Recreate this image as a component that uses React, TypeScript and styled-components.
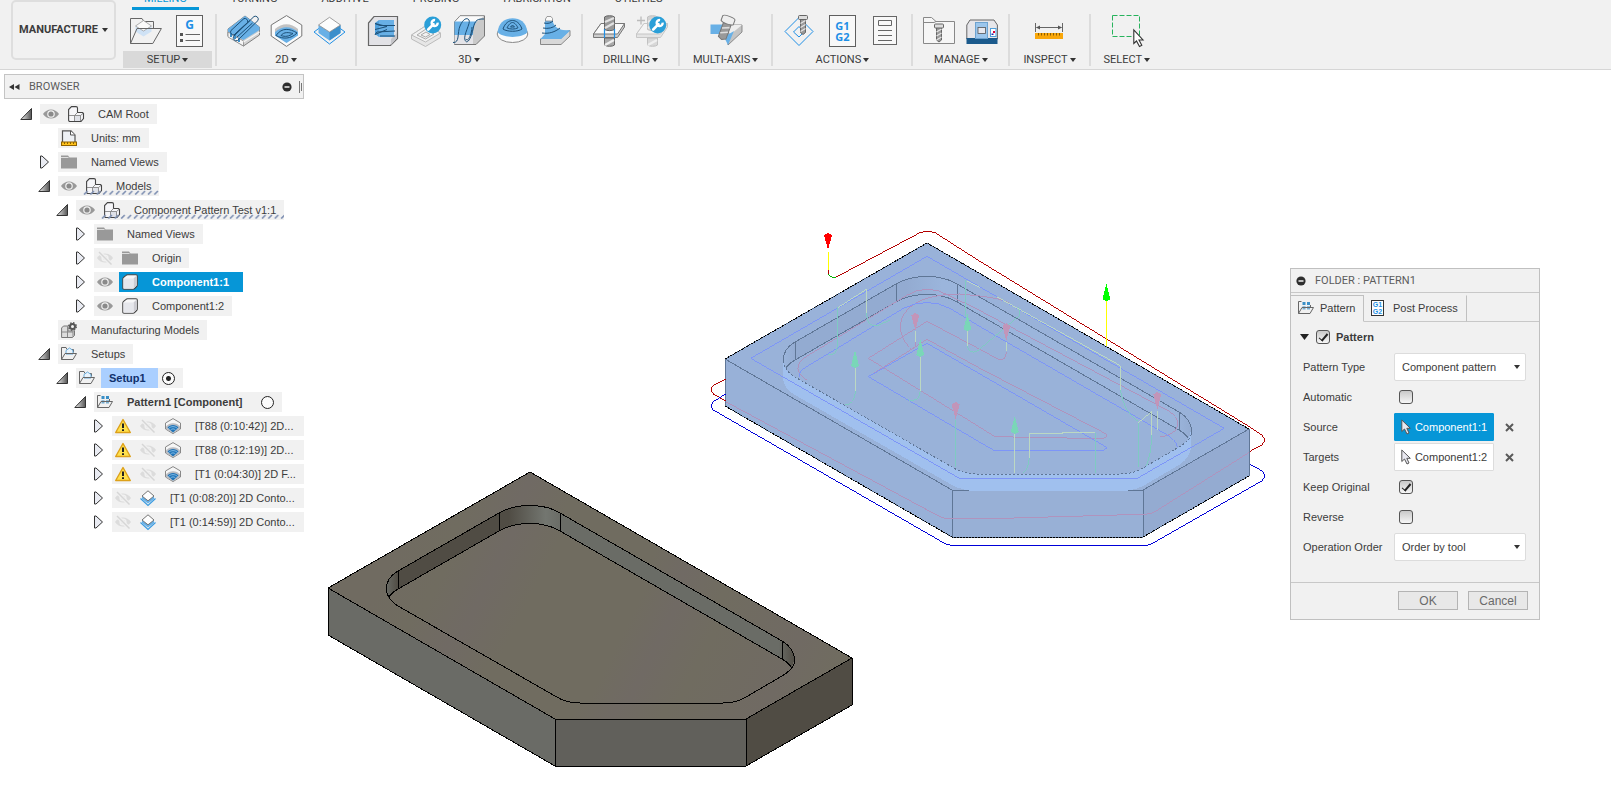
import React, { useState } from "react";
import styled, { createGlobalStyle, css } from "styled-components";

const ink = "#3c3c3c";
const panel = "#f1f1f1";
const accent = "#0696d7";
const ui = '"Liberation Sans", Arial, sans-serif';
const ribbon = 'Roboto, "Liberation Sans", sans-serif';

const Global = createGlobalStyle`
  *, *::before, *::after { box-sizing: border-box; }
  html, body { margin: 0; height: 100%; background: #fff; }
  body { font: 11px/16px ${ui}; color: ${ink}; overflow: hidden; }
  #root { height: 100%; }
  button, select, input { font: inherit; color: inherit; margin: 0; }
  ul { list-style: none; margin: 0; padding: 0; }
`;

const Page = styled.div`
  display: flex;
  flex-direction: column;
  min-height: 100%;
`;

/* ---------- ribbon ---------- */

const Toolbar = styled.header`
  display: flex;
  gap: 4px;
  padding: 0 11px 1px;
  background: ${panel};
  border-bottom: 1px solid #d6d6d6;
  font-family: ${ribbon};
`;

const PlainButton = styled.button`
  border: 0;
  padding: 0;
  background: none;
  display: flex;
  align-items: center;
  justify-content: center;
`;

const WorkspaceButton = styled(PlainButton)`
  width: 105px;
  height: 60px;
  gap: 4px;
  border: 2px solid #dedede;
  border-radius: 5px;
  font-weight: 700;
`;

const RibbonBody = styled.div`
  flex: 1;
  min-width: 0;
`;

const TabRow = styled.nav`
  display: flex;
  align-items: flex-end;
  gap: 20px;
  height: 10px;
  padding-left: 12px;
  overflow: hidden;
`;

const RibbonTab = styled.button<{ $active?: boolean }>`
  flex: none;
  height: 17px;
  padding: 0 12px 3px;
  border: 0;
  border-bottom: 3px solid ${(p) => (p.$active ? accent : "transparent")};
  background: none;
  color: ${(p) => (p.$active ? accent : ink)};
  line-height: 11px;
`;

const ToolRow = styled.div`
  display: flex;
  align-items: flex-start;
  padding-top: 4px;
`;

const Group = styled.section`
  display: flex;
  flex-direction: column;
  gap: 4px;
  padding: 1px 3px 0;
`;

const Divider = styled.div`
  width: 2px;
  height: 52px;
  background: #dcdcdc;
`;

const IconRow = styled.div`
  display: flex;
  justify-content: center;
  gap: 11px;
  padding: 0 7px;
`;

const GroupLabel = styled(PlainButton)<{ $active?: boolean }>`
  height: 17px;
  padding: 1px 10px 0;
  gap: 2px;
  background: ${(p) => (p.$active ? "#d9d9d9" : "none")};
  white-space: nowrap;
`;

const Svg = styled.svg`
  display: block;
  flex: none;
  overflow: visible;
`;

const Caret = () => (
  <Svg width="6" height="4" viewBox="0 0 6 4" aria-hidden="true">
    <path d="M0 0h6L3 4z" fill="#333" />
  </Svg>
);

const line = { fill: "none", stroke: "#666", strokeWidth: 1 };
const navy = { fill: "none", stroke: "#1d5078", strokeWidth: 1 };
const sky = "#68b0e6";
const azure = "#1e8fe6";

const Wrench = ({ x, y }: { x: number; y: number }) => (
  <g transform={`translate(${x} ${y})`}>
    <circle r="8.5" fill="#2a9fd8" />
    <path d="M-4.5 4.5L0.8 -0.8" stroke="#fff" strokeWidth="2.6" strokeLinecap="round" />
    <path d="M4.9 -2.4A3 3 0 1 1 2.4 -4.9" fill="none" stroke="#fff" strokeWidth="2.4" />
  </g>
);

const Screw = ({ x, y, h, w = 6 }: { x: number; y: number; h: number; w?: number }) => (
  <g transform={`translate(${x} ${y})`} stroke="#666" strokeWidth="1">
    <path d={`M${-w / 2} 3V${h - 2}L0 ${h}L${w / 2} ${h - 2}V3z`} fill="#9a9a9a" />
    {Array.from({ length: Math.floor((h - 6) / 4) }, (_, i) => (
      <path key={i} d={`M${-w / 2} ${8 + i * 4}L${w / 2} ${5 + i * 4}`} stroke="#e4e4e4" strokeWidth="1.4" />
    ))}
    <rect x={-w / 2 - 2} y="0" width={w + 4} height="4" rx="1" fill="#ddd" />
  </g>
);

const DrillShape = () => (
  <>
    <path d="M.5 22.5V19L8 8.5H31.5V12L24.5 22.5z" fill="#ccc" stroke="#777" />
    <path d="M.5 19L8 8.5H31.5L24.5 19z" fill="#fafafa" stroke="#777" />
    <path d="M11.5 2C13 .3 20 .3 21.500 2V14.500C19 16 14 16 11.500 14.500z" fill="#999" stroke="#666" />
    <path d="M12 7L21 3M12 13L21 8" stroke="#e2e2e2" strokeWidth="2.2" />
    <path d="M11.500 23V30C13 31.7 20 31.7 21.500 30V23z" fill="#aaa" stroke="#666" />
    <path d="M12 30L21 25" stroke="#eee" strokeWidth="2.2" />
  </>
);

const icons: Record<string, React.ReactNode> = {
  setup: (
    <>
      <path d="M.5 28.500V3.500H12l2 3H23.500V13" {...line} />
      <path d="M5.500 12L13.500 7 21.500 12V16.500L13.500 21.500 5.500 16.500z" fill="#cfe2f5" />
      <path d="M5.500 11L13.500 5.500 21.500 11 13.500 16z" fill="#fafafa" stroke="#999" strokeWidth=".8" />
      <path d="M.5 28.500L7 13.500H31.400L22.800 28.500z" {...line} />
    </>
  ),
  ncProgram: (
    <>
      <rect x="3.500" y=".5" width="26" height="31" fill="#f8f8f8" stroke="#5f5f5f" />
      <text x="16.500" y="13.500" textAnchor="middle" fontFamily="Noto Sans" fontWeight="700" fontSize="12" fill={azure}>G</text>
      <path d="M7 18h3v3H7zM7 24h3v3H7z" fill="#555" />
      <path d="M12.500 19.500H27M12.500 25.500H27" {...line} />
    </>
  ),
  adaptive: (
    <>
      <path d="M1 14L18 1 32.500 12V20L16.500 31 1 21z" fill="#d2d2d2" stroke="#777" strokeWidth=".9" />
      <path d="M1 14L18 1 32.500 12V15L16.500 25 1 17z" fill={sky} />
      <path d="M1 17L16.500 26V31L1 22z" fill="#f6f6f6" stroke="#888" strokeWidth=".8" />
      <path d="M4 18v4M8 20v4M12 23v4" stroke="#3e8fc9" strokeWidth="2" />
      <path d="M16.500 27L32.500 17" stroke="#f4f4f4" strokeWidth="1.200" />
      <g {...navy}>
        <path d="M4 15.500L17 3.500A3 3 0 0 1 20.500 7.500L7 20A3 3 0 0 1 4 15.500z" />
        <path d="M7 20L23 5.500M9.500 22.500L25.500 8" />
        <path d="M6.500 21.500L27 1.500A3 3 0 0 1 31 5.500L10.500 25.500A3 3 0 0 1 6.500 21.500z" />
      </g>
    </>
  ),
  pocket: (
    <>
      <path d="M16.500 .6L31.800 10V21L16.500 31.400 1.200 21V10z" fill="#fafafa" stroke="#777" />
      <path d="M5 14C12 7.500 21 7.500 28 14V17H5z" fill="#c2c2c2" />
      <path d="M5 17C12 10.500 21 10.500 28 17V20.500L16.500 28 5 20.500z" fill={sky} />
      <path d="M6 20.500C12 12 20 13.500 27 18C21 24 13 24.500 6 20.500zM11 20.500C14 16.500 19 17.500 23 18.500C19 21.500 15 22 11 20.500z" {...navy} />
    </>
  ),
  contour: (
    <>
      <path d="M1 17L16.500 5.500 32 17 16.500 29z" fill="none" stroke={azure} />
      <path d="M5.500 10V18L16.500 25.500 27.500 18V10L16.500 17z" fill={sky} />
      <path d="M16.500 17V25.500L27.500 18V10z" fill="#3b8fcb" />
      <path d="M5.500 10L16.500 2.300 27.500 10 16.500 17z" fill="#fdfdfd" stroke="#888" strokeWidth=".8" />
    </>
  ),
  adaptive3d: (
    <>
      <path d="M1.500 8L7 1.500H30.500V23.500L23.500 30.500H1.500z" fill="#e2e2e6" stroke="#666" strokeWidth="1.200" />
      <path d="M24 30V24L30 18V23z" fill="#c6c6ca" />
      <path d="M8 8L12 5H27V22H12L8 19z" fill="#4f9fdb" />
      <path d="M12 5H27V22H12z" fill={sky} />
      <path d="M28 10.500H13L8 8.500 20 11.500 8 14.500M20 14.500L8 19.500 10 17 28 16M13 21H28" {...navy} />
    </>
  ),
  pocket3d: (
    <>
      <g opacity=".5">
        <path d="M1.500 20L17 10 30.500 18V22.500L15.500 31.500 1.500 24z" fill="#ddd" stroke="#888" />
        <path d="M1.500 20L17 10 30.500 18 15.500 27z" fill="#f3f3f3" stroke="#888" />
        <path d="M7 20L16 14 24 19 15.500 24zM11 20L16 17 20 19.500 15.500 22z" {...line} />
      </g>
      <Wrench x={22.7} y={10} />
    </>
  ),
  parallel: (
    <>
      <path d="M1.500 7L7 .8H31.500V21L23 29.500H1.500z" fill="#c9c9c9" stroke="#777" />
      <path d="M2 7L7 1.300H31L23 7z" fill="#fafafa" />
      <path d="M1.500 6.500H24C21 9 20 15 20 20H1.500z" fill={sky} />
      <path d="M1.500 20H20L20 29H1.500z" fill="#e4e4e8" />
      <path d="M0 27.500C7 28 4 18 7 11S14 2 16 5 10 20 12 25 18 24 20 14 25 4 31 4" {...navy} />
      <path d="M13 24C15 28 19 18 19 12" {...navy} />
    </>
  ),
  scallop: (
    <>
      <ellipse cx="16.500" cy="19" rx="15.300" ry="8.500" fill="#fafafa" stroke="#888" />
      <path d="M1.500 17C3 7 9 3.300 16.500 3.300S30 7 31.500 17C26 23.500 7 23.500 1.500 17z" fill={sky} />
      <path d="M7 14C9 8 13 5.500 16.500 5.500S24 8 26 14C22 17 11 17 7 14zM11 12.800C13 9 15 7.500 16.500 7.500S20 9 22 12.800C19 14.500 14 14.500 11 12.800zM14.500 12L16.500 10 18.500 12z" {...navy} />
    </>
  ),
  spiral: (
    <>
      <path d="M1.500 24V29.500H22L31 21V15.500z" fill="#d8d8d8" stroke="#888" />
      <path d="M1.500 24H22L31 15.500H12z" fill={sky} />
      <path d="M6 4V19L1.500 24H22L31 15.500C20 16 14 12 13 3z" fill={sky} />
      <path d="M6.500 4L8 1.500H12L13.500 3.500V6H6.500z" fill="#fafafa" stroke="#888" strokeWidth=".8" />
      <path d="M5 8C9 9 12 8 14 6M4 13C9 14 14 13 17 10M3 18C10 19 16 17 21 13" {...navy} />
    </>
  ),
  drill: (
    <>
      <DrillShape />
      <path d="M11.500 14V23M21.500 14V23" stroke={azure} strokeWidth="1.200" />
    </>
  ),
  holeRecognition: (
    <>
      <g opacity=".34">
        <DrillShape />
      </g>
      <path d="M5 1.500V9.500M1 5.500H9" stroke="#bbb" strokeWidth="1.300" />
      <Wrench x={21.7} y={10} />
    </>
  ),
  multiAxis: (
    <>
      <path d="M18 10L32 10V17L18 30z" fill="#c4c4c4" stroke="#777" strokeWidth=".8" />
      <path d="M10 10L32 10 21 19z" fill="#eee" />
      <path d="M.5 9.500H14V19H.5zM14 22L24 16 18 30z" fill={sky} />
      <g transform="rotate(20 15 12)">
        <path d="M12 8H20V23L16 25 12 23z" fill="#999" stroke="#777" />
        <path d="M12.500 14L19.500 11M12.500 19L19.500 16" stroke="#ddd" strokeWidth="1.600" />
        <path d="M9 2C10 0 21 0 22 2V7C20 9 11 9 9 7z" fill="#eee" stroke="#777" />
      </g>
    </>
  ),
  simulate: (
    <>
      <path d="M2 16.500L16 2.500 30 16.500 16 30.500zM10.500 17L16 11.500 21 17 16 22z" fill="none" stroke={azure} />
      <Screw x={20} y={0.5} h={19} w={5} />
    </>
  ),
  postProcess: (
    <>
      <rect x="3.500" y=".5" width="26" height="31" fill="#f8f8f8" stroke="#5f5f5f" />
      <text fontFamily="Noto Sans" fontWeight="700" fontSize="11" fill={azure} textAnchor="middle">
        <tspan x="16.500" y="14.500">G1</tspan>
        <tspan x="16.500" y="26">G2</tspan>
      </text>
    </>
  ),
  setupSheet: (
    <g {...line}>
      <rect x="4.500" y="1.500" width="23" height="28" fill="#f8f8f8" />
      <path d="M9.500 5.500H22.500V10.500H9.500zM9 15.500H23M9 20.500H23M9 25.500H23" />
    </g>
  ),
  toolLibrary: (
    <>
      <path d="M.5 28.500V2.500H8.500L13 6.500H31.500V28.500zM.5 7.500H11L13 6.500" fill="#f6f6f6" stroke="#888" />
      <Screw x={16} y={9} h={18} w={5} />
    </>
  ),
  machineLibrary: (
    <>
      <path d="M.8 24V10L4 5H28L31.400 10V24z" fill="#e6e6ea" stroke="#666" />
      <rect x=".5" y="23" width="31" height="6" fill="#1b5a8c" />
      <rect x="9.500" y="7.500" width="12" height="16" fill="#9cc6ec" stroke="#6ea3d0" />
      <rect x="12" y="12.500" width="7.500" height="6" fill="#e8e8ee" stroke="#555" strokeWidth=".8" />
      <rect x="24.500" y="13.500" width="5.500" height="8" fill="#fff" stroke="#4f9fdb" />
      <path d="M27 16h2v2h-2z" fill="#d03" />
      <path d="M25.500 18.500h2v1.500h-2z" fill="#22a" />
    </>
  ),
  measure: (
    <>
      <path d="M2.500 8V17M29.500 8V17M3.500 12.500H28.500" {...line} />
      <path d="M3 12.500L7 10.500V14.500zM29 12.500L25 10.500V14.500z" fill="#555" />
      <rect x="2" y="18" width="28" height="6" fill="#f9a70b" />
      <path d="M5.500 18v2.500M8.500 18v2.500M11.500 18v2.500M14.500 18v2.500M17.500 18v2.500M20.500 18v2.500M23.500 18v2.500M26.500 18v2.500" stroke="#6d4a00" strokeWidth=".8" />
    </>
  ),
  select: (
    <>
      <rect x="1.500" y=".5" width="27" height="21" fill="none" stroke="#27b35c" strokeDasharray="5 2" />
      <path d="M22.800 15V28.500L25.500 26 28.500 31.500 30.800 30.300 28 25H32z" fill="#fff" stroke="#333" strokeWidth="1.100" />
    </>
  ),
};

const groups: { label: string; tools: [string, string][] }[] = [
  { label: "SETUP", tools: [["setup", "New setup"], ["ncProgram", "NC program"]] },
  { label: "2D", tools: [["adaptive", "2D adaptive"], ["pocket", "2D pocket"], ["contour", "2D contour"]] },
  {
    label: "3D",
    tools: [
      ["adaptive3d", "Adaptive clearing"],
      ["pocket3d", "Pocket clearing"],
      ["parallel", "Parallel"],
      ["scallop", "Scallop"],
      ["spiral", "Ramp"],
    ],
  },
  { label: "DRILLING", tools: [["drill", "Drill"], ["holeRecognition", "Hole recognition"]] },
  { label: "MULTI-AXIS", tools: [["multiAxis", "Swarf"]] },
  { label: "ACTIONS", tools: [["simulate", "Simulate"], ["postProcess", "Post process"], ["setupSheet", "Setup sheet"]] },
  { label: "MANAGE", tools: [["toolLibrary", "Tool library"], ["machineLibrary", "Machine library"]] },
  { label: "INSPECT", tools: [["measure", "Measure"]] },
  { label: "SELECT", tools: [["select", "Select"]] },
];

const Ribbon = () => (
  <Toolbar>
    <WorkspaceButton>
      MANUFACTURE <Caret />
    </WorkspaceButton>
    <RibbonBody>
      <TabRow>
        {["MILLING", "TURNING", "ADDITIVE", "PROBING", "FABRICATION", "UTILITIES"].map((t, i) => (
          <RibbonTab key={t} $active={i === 0}>{t}</RibbonTab>
        ))}
      </TabRow>
      <ToolRow>
        {groups.map((g, i) => (
          <React.Fragment key={g.label}>
            {i > 0 && <Divider />}
            <Group>
              <IconRow>
                {g.tools.map(([id, name]) => (
                  <PlainButton key={id} aria-label={name}>
                    <Svg width="32" height="32" viewBox="0 0 32 32">{icons[id]}</Svg>
                  </PlainButton>
                ))}
              </IconRow>
              <GroupLabel $active={i === 0}>
                {g.label} <Caret />
              </GroupLabel>
            </Group>
          </React.Fragment>
        ))}
      </ToolRow>
    </RibbonBody>
  </Toolbar>
);

/* ---------- browser tree ---------- */

const BrowserPanel = styled.aside`
  position: relative;
  width: 300px;
  margin: 4px 0 0 4px;
`;

const PanelHeader = styled.div`
  display: flex;
  align-items: center;
  gap: 7px;
  height: 25px;
  padding: 0 1px 0 4px;
  border: 1px solid #c4c4c4;
  background: ${panel};
  color: #5c5c5c;
`;

const HeaderTitle = styled.span`
  flex: 1;
  padding-left: 2px;
  font-family: ${ribbon};
`;

const Tree = styled.ul`
  display: flex;
  flex-direction: column;
  gap: 4px;
  padding-top: 5px;
`;

const TreeRow = styled.li<{ $level: number }>`
  display: flex;
  height: 20px;
  padding-left: ${(p) => 16 + p.$level * 18}px;
`;

const Toggle = styled(PlainButton)`
  width: 20px;
  flex: none;
  justify-content: flex-start;
`;

const RowBox = styled.div<{ $fill?: boolean }>`
  position: relative;
  display: flex;
  align-items: center;
  background: ${panel};
  white-space: nowrap;
  ${(p) => p.$fill && css`flex: 1;`}
`;

const FlagButton = styled(PlainButton)`
  padding: 0 6px 0 3px;
`;

const Entry = styled.div<{ $selected?: boolean; $bold?: boolean }>`
  display: flex;
  align-items: center;
  align-self: stretch;
  gap: 14px;
  padding: 0 8px 0 3px;
  ${(p) =>
    p.$bold &&
    css`
      padding-right: 14px;
      font-weight: 700;
    `}
  ${(p) =>
    p.$selected &&
    css`
      background: ${accent};
      color: #fff;
    `}
`;

const Chip = styled.span`
  display: flex;
  align-items: center;
  align-self: stretch;
  margin: 0 -14px 0 -8px;
  padding: 0 12px 0 8px;
  background: #aacfff;
  color: #10306b;
`;

const Radio = styled.input`
  appearance: none;
  width: 13px;
  height: 13px;
  margin: 0 8px 0 4px !important;
  border: 1px solid #222;
  border-radius: 50%;
  background: #fbfbfb;
  &:checked {
    background: radial-gradient(circle, #222 2px, #fbfbfb 3px);
  }
`;

const HatchMark = styled.svg`
  position: absolute;
  left: 25px;
  bottom: 1px;
  width: calc(100% - 25px);
  height: 5px;
`;

const Hatch = ({ id }: { id: string }) => (
  <HatchMark aria-hidden="true">
    <defs>
      <pattern id={id} width="6.400" height="5" patternUnits="userSpaceOnUse">
        <path d="M1 4.500L4.500 1" stroke="#8192b4" strokeWidth="1.700" />
      </pattern>
    </defs>
    <rect width="100%" height="5" fill={`url(#${id})`} />
  </HatchMark>
);

const small: Record<string, React.ReactNode> = {
  eye: (
    <>
      <path d="M0 8C4 2 12 2 16 8C12 14 4 14 0 8z" fill="#999" />
      <circle cx="8" cy="8" r="3.800" fill="#f1f1f1" />
      <circle cx="8" cy="8" r="2.600" fill="#8a8a8a" />
    </>
  ),
  hidden: (
    <>
      <path d="M0 8C4 2 12 2 16 8C12 14 4 14 0 8z" fill="#dcdcdc" />
      <circle cx="8" cy="8" r="3.600" fill="#f1f1f1" />
      <circle cx="8" cy="8" r="2" fill="#dcdcdc" />
      <path d="M2 2L14 14" stroke="#f1f1f1" strokeWidth="3.500" />
      <path d="M2 2L14.500 14.500" stroke="#d6d6d6" strokeWidth="1.400" />
    </>
  ),
  assembly: (
    <>
      <path d="M.6 14V3.500L3.500 .6H8Q9.500 .6 9.500 2V6.500H14.500L15.500 7.500V12.500L13 15.500H2Q.6 15.500 .6 14z" fill="#f6f6f9" stroke="#444" strokeWidth="1.100" />
      <path d="M6.500 15V9.500L9.500 6.500M6.500 9.500H12.500V15M12.500 9.500L15.200 7.300M1 9.500H6.500" fill="none" stroke="#777" strokeWidth=".8" />
      <path d="M7 10h5v5H7z" fill="#dfe1e8" />
    </>
  ),
  units: (
    <>
      <path d="M1.500 12V.8H10L14 5V12" fill="#eef1f5" stroke="#555" strokeWidth="1.200" />
      <path d="M9.500 1V5H14" fill="#fff" stroke="#555" />
      <rect x=".5" y="12" width="15" height="3.500" fill="#ffc21a" stroke="#8f6200" />
      <path d="M3.500 12v2M6.500 12v2M9.500 12v2M12.500 12v2" stroke="#8f6200" />
    </>
  ),
  folder: (
    <>
      <path d="M0 1.500H7L8.500 3.500H16V14.500H0z" fill="#999" />
      <path d="M0 3.500H7.500" stroke="#ddd" />
    </>
  ),
  body: (
    <>
      <path d="M.8 5Q.8 4 1.600 3.300L4 1.300Q4.500.8 5.500.8H14Q15.300.8 15.300 2V11Q15.300 11.800 14.600 12.500L12.500 14.600Q12 15.200 11 15.200H2Q.8 15.200.8 14z" fill="#f7f7f8" stroke="#444" strokeWidth="1.100" />
      <path d="M11.500 4.500V14.500L14.700 11.500V1.500z" fill="#cdcdd3" />
      <path d="M1.500 4.500H11.500V14.500H1.500z" fill="#e6e7ec" />
    </>
  ),
  models: (
    <>
      <path d="M.6 6L2.500 4H7V9H13.500V13.500L11.500 15.500H.6z" fill="#ddd" stroke="#777" />
      <path d="M6.500 15V5M1 10H12M12 10v5" stroke="#888" fill="none" />
      <circle cx="11.500" cy="4.500" r="2.500" fill="none" stroke="#555" strokeWidth="2" />
      <circle cx="11.500" cy="4.500" r="3.800" fill="none" stroke="#555" strokeWidth="1.400" strokeDasharray="1.500 1.500" />
    </>
  ),
  setup: (
    <>
      <path d="M.5 13.500V1.500H5L6 3.500M11 3.500H12.500V6.500" {...line} />
      <path d="M5 6V4.500L8.500 2 12 4.500V8H5z" fill="#e9f3fb" stroke="#5aa3d6" strokeWidth=".9" />
      <path d="M.5 13.500L4 7.500H15.500L12 13.500z" {...line} />
    </>
  ),
  pattern: (
    <>
      <path d="M.5 13.500V1.500H3.500M12.500 7V5" {...line} />
      <path d="M4.500 2h3v3h-3zM9 2h3v3H9zM4.500 6.500h3v3h-3zM9 6.500h3v3H9z" fill="#3a8fc7" />
      <path d="M.5 13.500L4 7.500H15.500L12 13.500z" {...line} fill="#f1f1f1" fillOpacity=".35" />
    </>
  ),
  warning: (
    <>
      <path d="M8 1.500L15.300 14.500H.7z" fill="#ffe14d" stroke="#dda11a" strokeWidth="1.400" strokeLinejoin="round" />
      <path d="M8 5.500V10" stroke="#222" strokeWidth="2" />
      <path d="M7 11.300h2v1.700H7z" fill="#222" />
    </>
  ),
  adaptive: (
    <>
      <path d="M8 .6L15.500 5V11L8 15.600.5 11V5z" fill="#f6f6f6" stroke="#888" />
      <path d="M1 8.500C4 4 12 4 15 8.500V11L8 15 1 11z" fill="#b9bcc2" />
      <path d="M2.500 9.500C5 6 11 6 13.500 9.500L8 14.500z" fill="#1f74b8" />
      <path d="M3.500 10.500C6 8 10 8 12.500 10.500M5.500 12C7 10.500 9 10.500 10.500 12" stroke="#9ccdf0" strokeWidth=".8" fill="none" />
    </>
  ),
  contour: (
    <>
      <path d="M.5 8.500L8 15.500 15.500 8.500" fill="none" stroke="#3a9be0" strokeWidth="1.200" />
      <path d="M2 6V9L8 13.500 14 9V6L8 10.500z" fill={sky} />
      <path d="M2 6L8 .8 14 6 8 10.800z" fill="#fff" stroke="#666" strokeWidth=".9" />
    </>
  ),
  post: (
    <>
      <rect x=".5" y=".5" width="12" height="15" fill="#fff" stroke="#333" />
      <text fontFamily="Liberation Sans" fontWeight="700" fontSize="7" fill={azure} textAnchor="middle">
        <tspan x="6.500" y="7.200">G1</tspan>
        <tspan x="6.500" y="13.700">G2</tspan>
      </text>
    </>
  ),
};

const SmallIcon = ({ name }: { name: string }) => (
  <Svg width="16" height="16" viewBox="0 0 16 16" aria-hidden="true">{small[name]}</Svg>
);

const MinusDot = () => (
  <Svg width="10" height="10" viewBox="0 0 10 10" aria-hidden="true">
    <circle cx="5" cy="5" r="4.600" fill="#2e2e2e" />
    <path d="M2.500 5h5" stroke="#fff" strokeWidth="1.400" />
  </Svg>
);

interface Node {
  level: number;
  text: string;
  open?: boolean;
  flags?: string[];
  icon: string;
  hatch?: boolean;
  selected?: boolean;
  bold?: boolean;
  chip?: boolean;
  radio?: boolean;
  fill?: boolean;
}

const nodes: Node[] = [
  { level: 0, text: "CAM Root", open: true, flags: ["eye"], icon: "assembly" },
  { level: 1, text: "Units: mm", icon: "units" },
  { level: 1, text: "Named Views", open: false, icon: "folder" },
  { level: 1, text: "Models", open: true, flags: ["eye"], icon: "assembly", hatch: true },
  { level: 2, text: "Component Pattern Test v1:1", open: true, flags: ["eye"], icon: "assembly", hatch: true },
  { level: 3, text: "Named Views", open: false, icon: "folder" },
  { level: 3, text: "Origin", open: false, flags: ["hidden"], icon: "folder" },
  { level: 3, text: "Component1:1", open: false, flags: ["eye"], icon: "body", selected: true, bold: true },
  { level: 3, text: "Component1:2", open: false, flags: ["eye"], icon: "body" },
  { level: 1, text: "Manufacturing Models", icon: "models" },
  { level: 1, text: "Setups", open: true, icon: "setup" },
  { level: 2, text: "Setup1", open: true, icon: "setup", bold: true, chip: true, radio: true },
  { level: 3, text: "Pattern1 [Component]", open: true, icon: "pattern", bold: true, radio: true },
  { level: 4, text: "[T88 (0:10:42)] 2D...", open: false, flags: ["warning", "hidden"], icon: "adaptive", fill: true },
  { level: 4, text: "[T88 (0:12:19)] 2D...", open: false, flags: ["warning", "hidden"], icon: "adaptive", fill: true },
  { level: 4, text: "[T1 (0:04:30)] 2D F...", open: false, flags: ["warning", "hidden"], icon: "adaptive", fill: true },
  { level: 4, text: "[T1 (0:08:20)] 2D Conto...", open: false, flags: ["hidden"], icon: "contour", fill: true },
  { level: 4, text: "[T1 (0:14:59)] 2D Conto...", open: false, flags: ["hidden"], icon: "contour", fill: true },
];

const Browser = () => {
  const [active, setActive] = useState("Setup1");
  return (
    <BrowserPanel>
      <PanelHeader>
        <Svg width="11" height="8" viewBox="0 0 11 8" aria-hidden="true">
          <path d="M5 1V7L0 4zM10.500 1V7L5.500 4z" fill="#333" />
        </Svg>
        <HeaderTitle>BROWSER</HeaderTitle>
        <PlainButton aria-label="Collapse browser"><MinusDot /></PlainButton>
        <Svg width="3" height="12" viewBox="0 0 3 12" aria-hidden="true">
          <path d="M.5 0V12M2.500 2V10" stroke="#777" />
        </Svg>
      </PanelHeader>
      <Tree>
        {nodes.map((n, i) => (
          <TreeRow key={i} $level={n.level}>
            <Toggle aria-label={`Toggle ${n.text}`} disabled={n.open === undefined}>
              {n.open !== undefined && (
                <Svg width="12" height="14" viewBox="0 0 12 14">
                  {n.open ? (
                    <>
                      <linearGradient id={`tri${i}`}>
                        <stop offset="0" stopColor="#eee" />
                        <stop offset="1" stopColor="#555" />
                      </linearGradient>
                      <path d="M11.500 1.500V12.500H.8z" fill={`url(#tri${i})`} stroke="#333" />
                    </>
                  ) : (
                    <path d="M2.500 1V13L4 13 10.500 7 4 1z" fill="#e9ebf2" stroke="#333" />
                  )}
                </Svg>
              )}
            </Toggle>
            <RowBox $fill={n.fill}>
              {n.flags?.map((f) => (
                <FlagButton key={f} aria-label={f}><SmallIcon name={f} /></FlagButton>
              ))}
              <Entry $selected={n.selected} $bold={n.bold}>
                <SmallIcon name={n.icon} />
                {n.chip ? <Chip>{n.text}</Chip> : <span>{n.text}</span>}
              </Entry>
              {n.radio && (
                <Radio
                  type="radio"
                  name="active-setup"
                  aria-label={`Activate ${n.text}`}
                  checked={active === n.text}
                  onChange={() => setActive(n.text)}
                />
              )}
              {n.hatch && <Hatch id={`hatch${i}`} />}
            </RowBox>
          </TreeRow>
        ))}
      </Tree>
    </BrowserPanel>
  );
};

/* ---------- 3D viewport ---------- */

const Stage = styled.main`
  position: relative;
  flex: 1;
  overflow: hidden;
`;

const Scene = styled.svg`
  position: absolute;
  inset: 0;
  width: 100%;
  height: 100%;
`;

const topFace = "M530 472L328 588 555 719H746L852 658z";
const pocketRim =
  "M398 571L499 513C516 503 544 503 560 513L782 641C798 650 798 667 782 676L746 697Q736 703 723 703H580Q566 703 555 696L398 606C382 597 382 580 398 571z";
const backRim = "M794 664C796 655 792 647 782 641L560 513C544 503 516 503 499 513L398 571Q386 578 386 590";
const frontRim = "M386 590Q388 600 398 606L555 696Q566 703 580 703H723Q736 703 746 697L782 676Q792 670 794 664";

const Part = ({ ghost }: { ghost?: boolean }) => {
  const id = ghost ? "ghost" : "solid";
  const c = ghost
    ? { top: "#99b2d9", left: "#98b1d8", front: "#98b0d6", right: "#94abd1", wall: ["#93abd1", "#9bb5dc"], edge: "#5f7696", floor: "#99b2d9" }
    : { top: "url(#stone)", left: "#6a6b66", front: "#61605b", right: "#504c44", wall: ["#504c44", "#6a6c66"], edge: "#000", floor: "url(#stone)" };
  return (
    <g stroke={c.edge} strokeLinejoin="round" shapeRendering="crispEdges">
      <defs>
        <clipPath id={`${id}-rim`}>
          <path d={pocketRim} />
        </clipPath>
        <linearGradient id={`${id}-wall`} gradientUnits="userSpaceOnUse" x1="386" x2="795" y1="0" y2="0">
          <stop offset="0" stopColor={c.wall[1]} />
          <stop offset=".03" stopColor={c.wall[0]} />
          <stop offset=".3" stopColor={c.wall[0]} />
          <stop offset=".39" stopColor={ghost ? c.wall[1] : "#737670"} />
          <stop offset=".43" stopColor={c.wall[1]} />
          <stop offset=".96" stopColor={c.wall[1]} />
          <stop offset="1" stopColor={c.wall[0]} />
        </linearGradient>
      </defs>
      <path d="M328 588V635L555 766V719z" fill={c.left} />
      <path d="M555 719H746V766H555z" fill={c.front} />
      <path d="M746 719L852 658V705L746 766z" fill={c.right} />
      <path d={topFace} fill={c.top} />
      <path d={pocketRim} fill={`url(#${id}-wall)`} stroke="none" />
      <g clipPath={`url(#${id}-rim)`}>
        <path d={pocketRim} fill={c.floor} transform="translate(0 18)" />
        <path d="M398 571v18M499 513v18M560 513v18M782 641v18" fill="none" />
      </g>
      {ghost && (
        <path
          d="M386 588Q386 599 398 606L555 696Q566 703 580 703H723Q736 703 746 697L782 676Q794 669 794 658V676Q794 686 782 694L746 715Q736 720 723 720H580Q566 720 555 714L398 624Q386 617 386 606z"
          fill="#a0c0ee"
          stroke="none"
        />
      )}
      <path d={backRim} fill="none" />
      <path d={frontRim} fill="none" strokeDasharray={ghost ? "2 2" : undefined} />
      {ghost && <path d="M328 588L530 472 852 658M852 705L746 766H555L328 635" fill="none" stroke="#000" strokeDasharray="2 1" />}
    </g>
  );
};

const Cone = ({ x, y, up, fill }: { x: number; y: number; up?: boolean; fill: string }) => (
  <path
    d={
      up
        ? `M${x} ${y}L${x + 12} ${y + 48}L${x} ${y + 54}L${x - 12} ${y + 48}z`
        : `M${x} ${y + 50}L${x + 12} ${y + 5}L${x} ${y - 2}L${x - 12} ${y + 5}z`
    }
    fill={fill}
    stroke="none"
  />
);

const red = "#b30000";
const paleRed = "#b093bd";
const paleBlue = "#7d95f8";
const mint = "#7ad6b8";
const paleMint = "#7fcac2";
const cream = "#bcd8c2";

/* Toolpath coordinates are on a grid of three units to the pixel. */
const Toolpaths = () => (
  <g transform="translate(690 220) scale(.33333)" fill="none" strokeWidth="3" shapeRendering="crispEdges">
    <g stroke={red}>
      <path d="M416 150V163M437 172L690 38Q711 29 735 38L870 124 1678 620 1715 645Q1732 660 1715 675L1680 694" />
      <path d="M107 543L70 522Q58 508 70 496L107 478" />
    </g>
    <path d="M416 163Q420 173 437 172" stroke="#00b000" />
    <path d="M107 522L70 545Q58 558 70 570L760 968Q772 976 785 976H1370Q1380 976 1395 966L1715 783Q1732 767 1715 752L1680 733" stroke="#0000d8" />
    <g stroke={paleRed}>
      <path d="M1678 697L1390 878Q1380 883 1350 883L870 897H770Q760 895 740 885L107 545" />
      <path d="M350 480Q300 445 345 412L650 226Q711 190 775 225L870 272 1440 575Q1480 605 1455 632 1440 648 1410 650" />
      <path d="M665 388C600 330 620 222 810 222L870 228Q930 235 960 250" />
      <path d="M535 415L711 304 870 388 925 418Q948 425 949 395" />
      <path d="M535 415L870 622 915 650 1235 656Q1262 650 1245 640L870 445 711 358 535 470" />
      <path d="M665 388Q680 385 676 365" />
    </g>
    <g stroke={paleBlue}>
      <path d="M711 109L182 415 810 776H1340L1603 625z" />
      <path d="M327 472Q328 452 350 440L640 265Q711 230 780 265L870 320 1420 638Q1460 660 1462 680" />
      <path d="M711 370L1252 683 1240 691H912L870 667 535 470z" />
    </g>
    <g stroke={paleMint}>
      <path d="M529 280Q532 322 560 318L600 300M442 262V380Q440 408 415 404" />
      <path d="M1291 510Q1300 575 1345 605V740M1385 645Q1383 710 1368 738" />
      <path d="M827 180V290M832 375Q835 402 860 395L990 285 985 262" />
      <path d="M497 513Q492 555 465 555M691 513Q688 548 655 540M797 600V742" />
      <path d="M1018 715Q1015 745 1000 760M1216 640V760" />
    </g>
    <g stroke={cream}>
      <path d="M529 280V208L445 262M920 230L1291 437V510M830 182L870 202" />
      <path d="M1018 715V640H1118V637H1216M1345 608L1385 575V645" />
      <path d="M497 440V513M691 405V513M832 330V377M974 640V760M676 333V365M949 365V393M1402 572V630" />
    </g>
    <path d="M416 97V150M1250 240V378" stroke="#ff0" />
    {[[495, 390], [691, 357], [832, 280], [974, 588]].map(([x, y]) => (
      <Cone key={x} x={x} y={y} up fill={mint} />
    ))}
    {[[676, 281], [797, 548], [949, 312], [1402, 518]].map(([x, y]) => (
      <Cone key={x} x={x} y={y} fill="#c295b9" />
    ))}
    <Cone x={1249} y={190} up fill="#0f0" />
    <Cone x={414} y={40} fill="#f00" />
  </g>
);

const Viewport = () => (
  <Scene viewBox="0 70 1611 722" preserveAspectRatio="xMidYMid slice" role="img" aria-label="Model viewport">
    <defs>
      <linearGradient id="stone" gradientUnits="userSpaceOnUse" x1="400" y1="540" x2="800" y2="740">
        <stop offset="0" stopColor="#706b61" />
        <stop offset=".1" stopColor="#706c60" />
        <stop offset=".2" stopColor="#706a64" />
        <stop offset=".3" stopColor="#706c60" />
        <stop offset=".52" stopColor="#706c60" />
        <stop offset=".6" stopColor="#706a64" />
        <stop offset=".7" stopColor="#706c60" />
        <stop offset=".9" stopColor="#706a63" />
        <stop offset="1" stopColor="#706c60" />
      </linearGradient>
    </defs>
    <Part />
    <g transform="translate(397 -229)">
      <Part ghost />
    </g>
    <Toolpaths />
  </Scene>
);

/* ---------- pattern dialog ---------- */

const Dialog = styled.form`
  position: absolute;
  top: 198px;
  right: 71px;
  width: 250px;
  border: 1px solid #c0c0c0;
  background: ${panel};
`;

const DialogHeader = styled.div`
  display: flex;
  align-items: center;
  gap: 9px;
  height: 24px;
  padding-left: 5px;
  border-bottom: 1px solid #c8c8c8;
  font-family: ${ribbon};
  color: #5c5c5c;
`;

const Tabs = styled.div`
  display: flex;
  height: 29px;
  padding-top: 2px;
`;

const DialogTab = styled(PlainButton)<{ $active?: boolean }>`
  gap: 6px;
  padding: 0 ${(p) => (p.$active ? 0 : 8)}px 2px 7px;
  width: ${(p) => (p.$active ? "73px" : "auto")};
  justify-content: flex-start;
  border-top: 1px solid ${(p) => (p.$active ? "#c0c0c0" : "transparent")};
  border-right: 1px solid #c0c0c0;
  border-bottom: 1px solid ${(p) => (p.$active ? "transparent" : "#c8c8c8")};
`;

const TabFiller = styled.div`
  flex: 1;
  border-bottom: 1px solid #c8c8c8;
`;

const Fields = styled.div`
  display: flex;
  flex-direction: column;
  padding: 0 13px 20px 12px;
`;

const SectionRow = styled.div`
  display: flex;
  align-items: center;
  gap: 7px;
  height: 30px;
  margin-left: -3px;
  font-weight: 700;
`;

const SectionLabel = styled.label`
  display: flex;
  align-items: center;
  gap: 6px;
`;

const Field = styled.div`
  display: grid;
  grid-template-columns: 91px 1fr;
  align-items: center;
  height: 30px;
`;

const Picker = styled.div`
  display: flex;
  align-items: center;
  gap: 11px;
`;

const CheckBox = styled.input`
  appearance: none;
  display: grid;
  place-items: center;
  width: 14px;
  height: 14px;
  border: 1px solid #555;
  border-radius: 3px;
  background: linear-gradient(#c9c9c9, #f6f6f6);
  &:checked::after {
    content: "";
    width: 5px;
    height: 9px;
    margin-top: -2px;
    border: solid #222;
    border-width: 0 2px 1px 0;
    transform: rotate(40deg);
  }
`;

const CheckSlot = styled.div`
  padding-left: 5px;
`;

const SelectWrap = styled.div`
  position: relative;
`;

const SelectBox = styled.select`
  appearance: none;
  display: block;
  width: 100%;
  height: 28px;
  padding: 0 20px 0 7px;
  border: 1px solid #dcdcdc;
  border-radius: 2px;
  background: #fff;
`;

const SelectCaret = styled.span`
  position: absolute;
  right: 6px;
  top: 12px;
  pointer-events: none;
`;

const PickButton = styled(PlainButton)<{ $active?: boolean }>`
  width: 100px;
  height: 28px;
  gap: 4px;
  border: 1px solid ${(p) => (p.$active ? accent : "#dcdcdc")};
  border-radius: 1px;
  background: ${(p) => (p.$active ? accent : "#fff")};
  color: ${(p) => (p.$active ? "#fff" : ink)};
`;

const Footer = styled.div`
  display: flex;
  justify-content: flex-end;
  gap: 10px;
  height: 37px;
  padding: 8px 11px;
  border-top: 1px solid #c8c8c8;
`;

const FooterButton = styled(PlainButton)`
  width: 60px;
  height: 19px;
  border: 1px solid #b4b4b4;
  background: #e8e8e8;
  color: #6a6a6a;
  font-size: 12px;
`;

const Cursor = () => (
  <Svg width="10" height="16" viewBox="0 0 10 16" aria-hidden="true">
    <path d="M.8 1V12.500L3.500 10 6 15 8 14 5.800 9.300H9.300z" fill="#e8e8f0" stroke="#555" />
  </Svg>
);

const Cross = () => (
  <Svg width="9" height="9" viewBox="0 0 9 9" aria-hidden="true">
    <path d="M1 1L8 8M8 1L1 8" stroke="#5a5a5a" strokeWidth="2" />
  </Svg>
);

const Dropdown = ({ id, value }: { id: string; value: string }) => (
  <SelectWrap>
    <SelectBox id={id} defaultValue={value}>
      <option>{value}</option>
    </SelectBox>
    <SelectCaret><Caret /></SelectCaret>
  </SelectWrap>
);

const CheckField = ({ id, label, on }: { id: string; label: string; on?: boolean }) => (
  <Field>
    <label htmlFor={id}>{label}</label>
    <CheckSlot><CheckBox id={id} type="checkbox" defaultChecked={on} /></CheckSlot>
  </Field>
);

const PickField = ({ id, label, value, active }: { id: string; label: string; value: string; active?: boolean }) => (
  <Field>
    <label htmlFor={id}>{label}</label>
    <Picker>
      <PickButton type="button" id={id} $active={active}><Cursor />{value}</PickButton>
      <PlainButton type="button" aria-label={`Clear ${label}`}><Cross /></PlainButton>
    </Picker>
  </Field>
);

const PatternDialog = () => (
  <Dialog onSubmit={(e) => e.preventDefault()}>
    <DialogHeader><MinusDot />FOLDER : PATTERN1</DialogHeader>
    <Tabs>
      <DialogTab type="button" $active><SmallIcon name="pattern" />Pattern</DialogTab>
      <DialogTab type="button"><SmallIcon name="post" />Post Process</DialogTab>
      <TabFiller />
    </Tabs>
    <Fields>
      <SectionRow>
        <Svg width="9" height="6" viewBox="0 0 9 6" aria-hidden="true"><path d="M0 0h9L4.500 6z" fill="#222" /></Svg>
        <SectionLabel><CheckBox type="checkbox" defaultChecked />Pattern</SectionLabel>
      </SectionRow>
      <Field>
        <label htmlFor="type">Pattern Type</label>
        <Dropdown id="type" value="Component pattern" />
      </Field>
      <CheckField id="automatic" label="Automatic" />
      <PickField id="source" label="Source" value="Component1:1" active />
      <PickField id="targets" label="Targets" value="Component1:2" />
      <CheckField id="keep" label="Keep Original" on />
      <CheckField id="reverse" label="Reverse" />
      <Field>
        <label htmlFor="order">Operation Order</label>
        <Dropdown id="order" value="Order by tool" />
      </Field>
    </Fields>
    <Footer>
      <FooterButton type="submit">OK</FooterButton>
      <FooterButton type="button">Cancel</FooterButton>
    </Footer>
  </Dialog>
);

export default function App() {
  return (
    <Page>
      <Global />
      <Ribbon />
      <Stage>
        <Viewport />
        <Browser />
        <PatternDialog />
      </Stage>
    </Page>
  );
}
